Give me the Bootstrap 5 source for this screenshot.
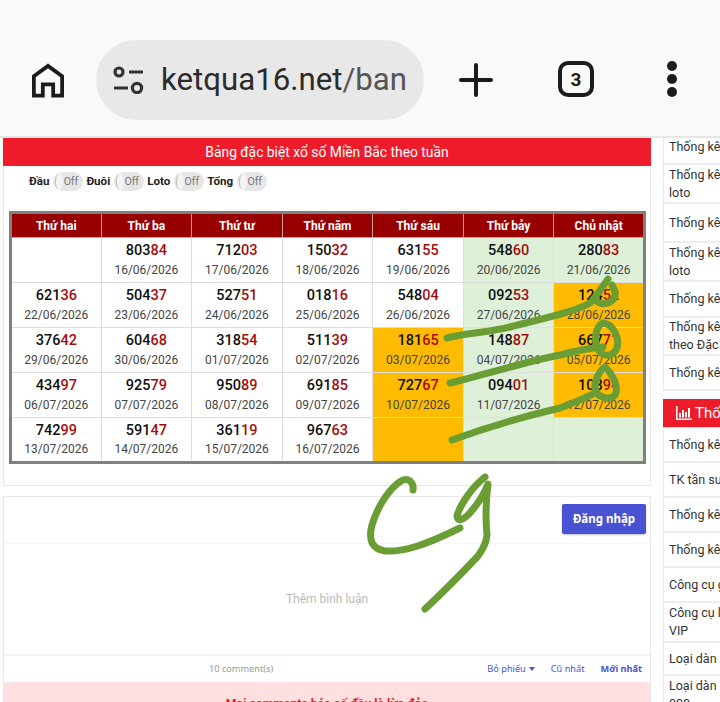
<!DOCTYPE html>
<html lang="vi">
<head>
  <meta charset="UTF-8">
  <title>Bảng đặc biệt theo tuần</title>
  <link href="https://cdn.jsdelivr.net/npm/bootstrap@5.3.0/dist/css/bootstrap.min.css" rel="stylesheet">
  <style>
    html, body { height: 702px; overflow: hidden; }
    body { font-family: Roboto, "Liberation Sans", sans-serif; background: #fff; position: relative; width: 720px; }

    .browser-bar { height: 138px; background: #f9f9f9; border-bottom: 2px solid #e6e6e6; padding-top: 40px; }
    .home-btn { width: 96px; height: 80px; }
    .url-pill { width: 328px; height: 80px; border-radius: 40px; background: #e8e8e8; padding-left: 17px; }
    .url-text { font-size: 31.2px; color: #2b2b2b; margin-left: 17px; white-space: nowrap; line-height: 1; }
    .url-text span { color: #555; }
    .plus-btn { width: 104px; height: 80px; }
    .tab-btn { width: 36px; height: 36px; border: 4px solid #1c1c1c; border-radius: 10px; font-size: 19px; font-weight: 700; color: #1c1c1c; margin: 21px 0 0 30px; line-height: 1; }
    .dots-btn { width: 10px; margin: 21px 0 0 73px; gap: 3px; }
    .dots-btn i { display: block; width: 10px; height: 10px; border-radius: 50%; background: #1c1c1c; }

    .page-wrap { width: 720px; }
    .main-col { width: 648px; margin-left: 3px; flex: none; }
    .result-box { height: 348px; border: 1px solid #e8e8e8; border-top: 0; margin-bottom: 10px; }
    .result-title { height: 28px; background: #ee1c2b; color: #fff; font-size: 13.85px; line-height: 28px; text-align: center; margin: 0 -1px; }
    .toggle-row { padding: 6px 0 0 25px; height: 45px; font-size: 11.6px; font-weight: 700; color: #222; line-height: 18px; }
    .toggle-pill { position: relative; overflow: hidden; flex: none; width: 30px; height: 19px; border-radius: 10px; background: #e6e6e6; color: #777; font-size: 10.5px; font-weight: 400; line-height: 19px; text-align: center; margin: 0 3px 0 4px; padding-left: 5px; }
    .toggle-pill::before { content: ""; position: absolute; left: 2px; top: 1px; width: 8px; height: 17px; background: #f4f4f4; border-left: 1px solid #bdbdbd; border-radius: 50%; }

    .week-table { width: 637px; margin: 0 0 0 5px; border: 3px solid #808080; table-layout: fixed; border-collapse: collapse; }
    .week-table th { height: 25px; background: #980000; color: #fff; font-size: 12px; font-weight: 700; text-align: center; padding: 0; border: 1px solid #c9a0a0; line-height: 1; }
    .week-table td { height: 45px; padding: 0; text-align: center; border: 1px solid #ddd; background: #fff; line-height: 1; box-shadow: none; }
    .week-table td.cell-green { background: #dff0d8; }
    .week-table td.cell-orange { background: #ffbb00; }
    .num-val { font-size: 14.5px; font-weight: 500; color: #111; margin-bottom: 5px; }
    .num-val span { color: #a50d0d; }
    .num-date { font-size: 12px; color: #444; }

    .comment-box { border: 1px solid #e8e8e8; height: 230px; }
    .login-btn { width: 84px; height: 30px; margin: 7px 4px 0 0; background: #4a52d4; border-radius: 2px; color: #fff; font-family: "Noto Sans", sans-serif; font-size: 11.5px; font-weight: 700; line-height: 30px; text-align: center; box-shadow: 0 1px 2px rgba(0,0,0,.25); }
    .comment-area { height: 113px; margin-top: 9px; border-top: 1px solid #f5f5f5; border-bottom: 2px solid #f2f2f2; color: #bbb; font-size: 12px; }
    .comment-bar { height: 26px; font-family: "Noto Sans", sans-serif; font-size: 9.2px; color: #4a52d4; padding-right: 8px; }
    .comment-count { color: #999; margin-left: 205px; margin-right: auto; }
    .caret-down { display: inline-block; border: 3.5px solid transparent; border-top: 4px solid #4a52d4; border-bottom: 0; margin-left: 3px; vertical-align: 1px; }
    .warn-box { height: 40px; background: #ffdfdf; border-radius: 3px 3px 0 0; color: #ee1c2b; font-weight: 700; font-size: 12.2px; text-align: center; padding-top: 13px; }

    .side-col { width: 200px; margin-left: 12px; flex: none; font-size: 12.5px; color: #333; }
    .side-list { border-left: 1px solid #e8e8e8; }
    .side-item { display: flex; align-items: center; padding-left: 5px; border-bottom: 2px solid #eee; line-height: 18px; white-space: nowrap; }
    .row-27 { height: 27px; padding-bottom: 8px; }
    .row-33 { height: 33px; }
    .row-35 { height: 35px; }
    .row-36 { height: 36px; }
    .row-38 { height: 38px; }
    .row-39 { height: 39px; }
    .row-40 { height: 40px; }
    .side-head { height: 29px; margin: 8px 0 0; background: #ee1c2b; color: #fff; font-size: 15px; padding-left: 13px; gap: 3px; border-bottom: 1px solid #ddd; }
    .ink-layer { position: absolute; left: 0; top: 0; pointer-events: none; }
    .ink-layer path { fill: none; stroke: #6a9d34; stroke-width: 7; stroke-linecap: round; stroke-linejoin: round; }
  </style>
</head>
<body>
  <div class="browser-bar d-flex align-items-start">
    <div class="home-btn d-flex align-items-center justify-content-center">
      <svg width="32" height="35" viewBox="0 0 34 36" fill="none" stroke="#1c1c1c" stroke-width="4"><path d="M2 34V13.5L17 2.5 32 13.5V34H22.5V22H11.5V34Z" stroke-linejoin="miter"/></svg>
    </div>
    <div class="url-pill d-flex align-items-center">
      <svg width="31" height="28" viewBox="0 0 31 28" fill="none" stroke="#333" stroke-width="3.2"><circle cx="6" cy="6" r="4"/><path d="M16 6H30M1 22H15"/><circle cx="24" cy="22" r="4.6"/></svg>
      <div class="url-text">ketqua16.net<span>/ban</span></div>
    </div>
    <div class="plus-btn d-flex align-items-center justify-content-center">
      <svg width="34" height="34" viewBox="0 0 34 34" stroke="#1c1c1c" stroke-width="4" stroke-linecap="round"><path d="M17 2V32M2 17H32"/></svg>
    </div>
    <div class="tab-btn d-flex align-items-center justify-content-center">3</div>
    <div class="dots-btn d-flex flex-column"><i></i><i></i><i></i></div>
  </div>

  <div class="page-wrap d-flex">
    <div class="main-col">
      <div class="result-box">
        <div class="result-title">Bảng đặc biệt xổ số Miền Bắc theo tuần</div>
        <div class="toggle-row d-flex">
          <span>Đầu</span><span class="toggle-pill">Off</span>
          <span>Đuôi</span><span class="toggle-pill">Off</span>
          <span>Loto</span><span class="toggle-pill">Off</span>
          <span>Tổng</span><span class="toggle-pill">Off</span>
        </div>
        <table class="week-table">
          <thead>
            <tr><th>Thứ hai</th><th>Thứ ba</th><th>Thứ tư</th><th>Thứ năm</th><th>Thứ sáu</th><th>Thứ bảy</th><th>Chủ nhật</th></tr>
          </thead>
          <tbody id="weekBody"></tbody>
        </table>
      </div>

      <div class="comment-box">
        <div class="d-flex justify-content-end"><div class="login-btn">Đăng nhập</div></div>
        <div class="comment-area d-flex align-items-center justify-content-center">Thêm bình luận</div>
        <div class="comment-bar d-flex align-items-center gap-3">
          <span class="comment-count">10 comment(s)</span>
          <span>Bỏ phiếu<i class="caret-down"></i></span>
          <span>Cũ nhất</span>
          <span class="fw-bold">Mới nhất</span>
        </div>
        <div class="warn-box">Mọi comments báo số đều là lừa đảo</div>
      </div>
    </div>

    <div class="side-col">
      <div class="side-list">
        <div class="side-item row-27">Thống kê</div>
        <div class="side-item row-39">Thống kê<br>loto</div>
        <div class="side-item row-39">Thống kê</div>
        <div class="side-item row-39">Thống kê<br>loto</div>
        <div class="side-item row-36">Thống kê</div>
        <div class="side-item row-38">Thống kê<br>theo Đặc</div>
        <div class="side-item row-35">Thống kê</div>
      </div>
      <div class="side-head d-flex align-items-center">
        <svg width="16" height="14" viewBox="0 0 16 14" fill="#fff"><path d="M0 0H1.5V12.5H16V14H0ZM3 7H5V11.5H3ZM6 4H8V11.5H6ZM9 6H11V11.5H9ZM12 2H14V11.5H12Z"/></svg>
        <span>Thống kê</span>
      </div>
      <div class="side-list">
        <div class="side-item row-35">Thống kê</div>
        <div class="side-item row-35">TK tần suất</div>
        <div class="side-item row-35">Thống kê</div>
        <div class="side-item row-35">Thống kê</div>
        <div class="side-item row-35">Công cụ ghép</div>
        <div class="side-item row-40">Công cụ lọc<br>VIP</div>
        <div class="side-item row-33">Loại dàn đề</div>
        <div class="side-item row-40">Loại dàn 3 càng<br>000</div>
      </div>
    </div>
  </div>

  <svg class="ink-layer" width="720" height="702" viewBox="0 0 720 702">
    <path d="M447 338C470 332 488 333 510 327C540 319 572 313 590 303C597 296 602 287 608 279"/>
    <path d="M612 285C616 292 617 298 610 302C604 305 598 304 595 299"/>
    <path d="M450 383C480 376 520 363 560 355C575 351 590 348 603 347"/>
    <path d="M603 323C596 326 594 338 597 348C601 356 612 359 617 348C620 338 613 324 603 323"/>
    <path d="M452 440C490 426 530 415 560 408C575 402 588 397 597 392"/>
    <path d="M605 367C598 372 594 382 595 390C597 397 610 401 615 395C619 388 614 376 605 367"/>
    <path d="M413 490C414 482 408 477 401 481C390 488 378 505 372 525C368 540 372 549 385 551C405 552 425 545 460 528"/>
    <path d="M485 477C472 487 460 505 457 516C457 522 463 520 469 514C477 505 484 495 488 484C486 500 485 515 487 535C486 545 482 550 478 556C462 573 440 595 425 609"/>
  </svg>

  <script>
    const weeks = [
      [null, ["80384","16/06/2026"], ["71203","17/06/2026"], ["15032","18/06/2026"], ["63155","19/06/2026"], ["54860","20/06/2026"], ["28083","21/06/2026"]],
      [["62136","22/06/2026"], ["50437","23/06/2026"], ["52751","24/06/2026"], ["01816","25/06/2026"], ["54804","26/06/2026"], ["09253","27/06/2026"], ["12452","28/06/2026"]],
      [["37642","29/06/2026"], ["60468","30/06/2026"], ["31854","01/07/2026"], ["51139","02/07/2026"], ["18165","03/07/2026"], ["14887","04/07/2026"], ["66771","05/07/2026"]],
      [["43497","06/07/2026"], ["92579","07/07/2026"], ["95089","08/07/2026"], ["69185","09/07/2026"], ["72767","10/07/2026"], ["09401","11/07/2026"], ["10894","12/07/2026"]],
      [["74299","13/07/2026"], ["59147","14/07/2026"], ["36119","15/07/2026"], ["96763","16/07/2026"], null, null, null]
    ];
    const orange = { "2-4": 1, "3-4": 1, "4-4": 1, "1-6": 1, "2-6": 1, "3-6": 1 };

    function cellClass(r, c) {
      if (orange[r + "-" + c]) return "cell-orange";
      if (c >= 5) return "cell-green";
      return "";
    }

    document.getElementById("weekBody").innerHTML = weeks.map((week, r) => {
      const cells = week.map((item, c) => {
        const inner = item
          ? `<div class="num-val">${item[0].slice(0, 3)}<span>${item[0].slice(3)}</span></div><div class="num-date">${item[1]}</div>`
          : "";
        return `<td class="${cellClass(r, c)}">${inner}</td>`;
      }).join("");
      return `<tr>${cells}</tr>`;
    }).join("");
  </script>
  <script src="https://cdn.jsdelivr.net/npm/bootstrap@5.3.0/dist/js/bootstrap.bundle.min.js"></script>
</body>
</html>
